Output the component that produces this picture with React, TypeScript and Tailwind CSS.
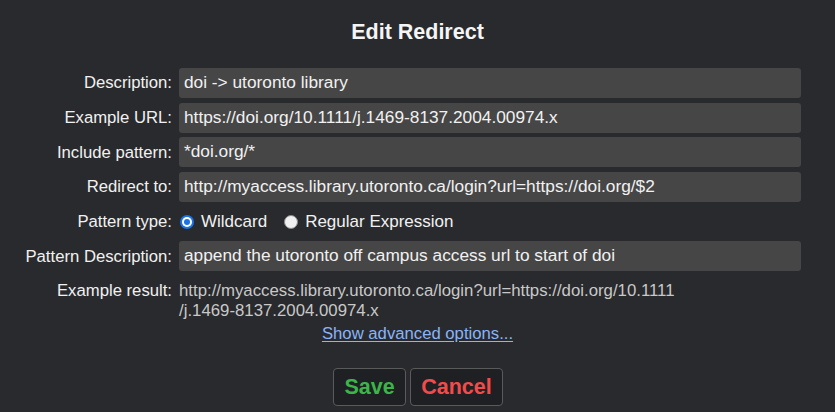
import React from "react";

const font = { fontFamily: '"Liberation Sans", Arial, sans-serif' };

function Field({ label, value }: { label: string; value: string }) {
  return (
    <>
      <div className="flex h-[30px] items-center justify-end text-[16.7px] text-[#f1f1f1]">{label}</div>
      <div className="flex h-[30px] items-center rounded-[3px] bg-[#464646] px-[5px] text-[17.3px] text-[#f1f1f1] whitespace-nowrap overflow-hidden">
        {value}
      </div>
    </>
  );
}

export default function App() {
  return (
    <div className="min-h-[412px] w-full bg-[#292a2d] text-[#f1f1f1]" style={font}>
      <div className="flex flex-col items-center pt-[19px]">
        <h1 className="text-[21.5px] font-bold leading-[26px] text-[#f5f5f5]">Edit Redirect</h1>
      </div>
      <div className="mt-[23px] grid grid-cols-[172px_622px] gap-x-[7px] gap-y-[4.67px]">
        <Field label="Description:" value="doi -> utoronto library" />
        <Field label="Example URL:" value="https://doi.org/10.1111/j.1469-8137.2004.00974.x" />
        <Field label="Include pattern:" value="*doi.org/*" />
        <Field label="Redirect to:" value="http://myaccess.library.utoronto.ca/login?url=https://doi.org/$2" />
        <div className="flex h-[30px] items-center justify-end text-[16.7px]">Pattern type:</div>
        <div className="flex h-[30px] items-center text-[17px]">
          <span className="ml-[1px] flex h-[14px] w-[14px] items-center justify-center rounded-full bg-[#1a73e8]">
            <span className="flex h-[10px] w-[10px] items-center justify-center rounded-full bg-white">
              <span className="h-[6px] w-[6px] rounded-full bg-[#1a73e8]" />
            </span>
          </span>
          <span className="ml-[7px]">Wildcard</span>
          <span className="ml-[17px] h-[14px] w-[14px] rounded-full border border-[#8a8a8a] bg-[#f0f0f0]" />
          <span className="ml-[7px]">Regular Expression</span>
        </div>
        <Field label="Pattern Description:" value="append the utoronto off campus access url to start of doi" />
        <div className="mt-[5px] flex justify-end text-[16.7px] leading-[20px]">Example result:</div>
        <div className="mt-[5px] text-[16.8px] leading-[20px] text-[#c8c8c8] whitespace-nowrap">
          <span className="block">http://myaccess.library.utoronto.ca/login?url=https://doi.org/10.1111</span>
          <span className="block">/j.1469-8137.2004.00974.x</span>
        </div>
      </div>
      <div className="mt-[3px] flex justify-center">
        <a href="#" className="text-[16.7px] leading-[20px] text-[#8ab4f8] underline underline-offset-[2px]">
          Show advanced options...
        </a>
      </div>
      <div className="mt-[24px] flex justify-center gap-[4px] pl-[1px]">
        <button className="h-[38px] w-[73px] rounded-[4px] border border-[#5a5a5a] bg-[#1f2023] text-[21.5px] font-bold text-[#3cb44a]">
          Save
        </button>
        <button className="h-[38px] w-[93px] rounded-[4px] border border-[#5a5a5a] bg-[#1f2023] text-[21.5px] font-bold text-[#f24b4b]">
          Cancel
        </button>
      </div>
    </div>
  );
}
